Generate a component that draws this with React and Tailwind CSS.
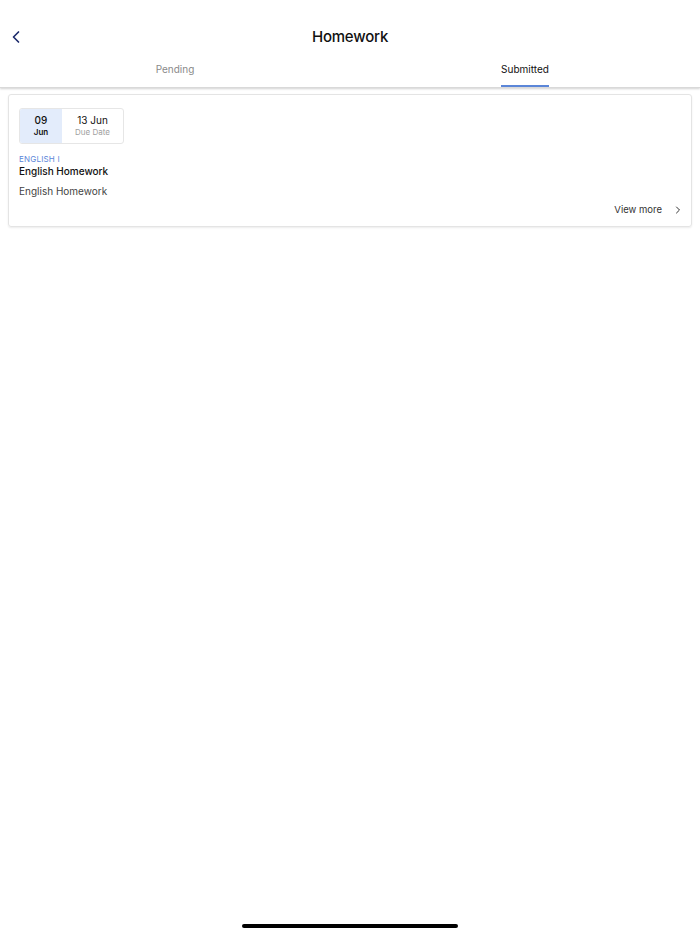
import { ChevronLeft, ChevronRight } from 'lucide-react';

const TABS = ['Pending', 'Submitted'];

export default function App() {
  const active = 'Submitted';

  return (
    <div className="relative w-[700px] h-[934px] bg-white overflow-hidden font-['Inter',sans-serif] text-[#111]">
      {/* Header */}
      <div className="relative shadow-[0_1px_2px_rgba(0,0,0,0.18)] border-b border-[#d9d9d9]">
        <div className="h-[57px] pt-[17px] flex items-center justify-center relative">
          <button className="absolute left-[6px] top-[27px] text-[#1c2a6b]">
            <ChevronLeft size={20} strokeWidth={2} />
          </button>
          <h1 className="text-[15px] font-medium tracking-[-0.2px]">Homework</h1>
        </div>
        <div className="flex h-[30px]">
          {TABS.map((tab) => (
            <div key={tab} className="flex-1 flex justify-center">
              <div
                className={`h-full flex items-center pb-[3px] text-[10px] border-b-2 ${
                  tab === active ? 'border-[#5b86d8] text-[#111]' : 'border-transparent text-[#8a8a8a]'
                }`}
              >
                {tab}
              </div>
            </div>
          ))}
        </div>
      </div>

      {/* List */}
      <div className="px-[8px] pt-[6px]">
        <div className="border border-[#e4e4e4] rounded-[3px] shadow-[0_1px_2px_rgba(0,0,0,0.08)] px-[10px] pt-[11px] pb-[9px]">
          <div className="inline-flex border border-[#e6e6e6] rounded-[3px] overflow-hidden">
            <div className="w-[42px] h-[34px] bg-[#e3ecfb] flex flex-col items-center justify-center leading-[12px]">
              <span className="text-[10px] font-medium">09</span>
              <span className="text-[8px] font-semibold">Jun</span>
            </div>
            <div className="w-[61px] h-[34px] flex flex-col items-center justify-center leading-[12px]">
              <span className="text-[10px]">13 Jun</span>
              <span className="text-[8px] text-[#a0a0a0]">Due Date</span>
            </div>
          </div>
          <div className="mt-[10px] text-[8px] text-[#5b86d8] tracking-[0.2px] leading-[11px]">ENGLISH I</div>
          <div className="text-[10px] font-medium leading-[13px]">English Homework</div>
          <div className="mt-[7px] text-[10px] text-[#444] leading-[13px]">English Homework</div>
          <div className="mt-[5px] flex justify-end items-center gap-[10px] -mr-[3px]">
            <span className="text-[9.5px] text-[#333]">View more</span>
            <ChevronRight size={12} strokeWidth={2} className="text-[#333]" />
          </div>
        </div>
      </div>

      {/* Home indicator */}
      <div className="absolute left-[242px] top-[924px] w-[216px] h-[4px] rounded-full bg-black" />
    </div>
  );
}
